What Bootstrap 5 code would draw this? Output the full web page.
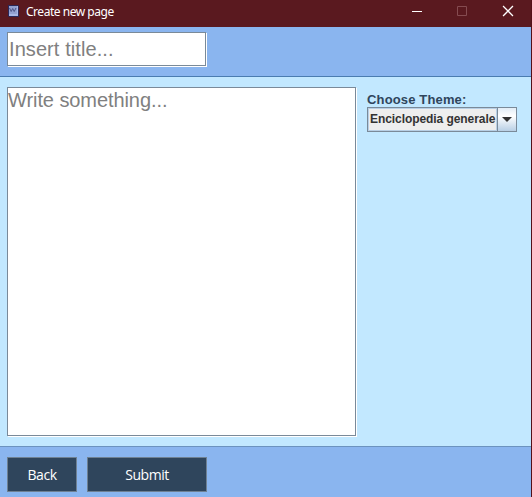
<!DOCTYPE html>
<html lang="en">
<head>
<meta charset="utf-8">
<title>Create new page</title>
<link href="https://cdn.jsdelivr.net/npm/bootstrap@5.3.0/dist/css/bootstrap.min.css" rel="stylesheet">
<style>
body{background:#c2e8ff;font-family:"Liberation Sans",Arial,sans-serif}
.window{width:532px;height:497px;border-right:1px solid #541018;overflow:hidden}
.titlebar{height:27px;background:#5a191f;color:#fff;font:12px/24px "Noto Sans","Open Sans",sans-serif;padding-left:8px}
.app-icon{width:11px;height:12px;margin-top:5px}
.caption-text{margin-left:7px;letter-spacing:-.47px;flex:1}
.window-ctl{width:46px;height:24px}
.topbar{height:50px;background:#8ab5ef;border-bottom:1px solid #4a7cb0;padding:5px 7px}
.bottombar{height:51px;background:#8ab5ef;border-top:1px solid #6c93bf;padding:10px 7px;gap:10px}
.content{height:369px;padding:10px 7px;gap:10px}
.field{border:1px solid #7a8a99;border-radius:0;background:#fff;box-shadow:1px 1px 0 #fff;padding:0 1px;font-size:20px;line-height:24px;color:#808080;resize:none;outline:0;display:block;overflow:hidden}
.field::placeholder{color:#808080;opacity:1}
.title-input{width:199px;height:34px;letter-spacing:.08px}
.body-input{width:349px;height:349px;margin-right:1px;padding:0;letter-spacing:-.08px}
.theme-label{font-size:13px;font-weight:700;line-height:15px;letter-spacing:.15px;color:#2f455c;padding-top:5px;height:20px;white-space:nowrap}
.combo{width:150px;height:25px;border:1px solid #7a8a99;background:#eee}
.combo-value{width:129px;border:1px solid #b8cfe5;color:#333;font-size:12px;font-weight:700;line-height:21px;letter-spacing:-.07px;padding-left:1px;white-space:nowrap}
.combo-arrow{width:19px;border-left:1px solid #7a8a99;background:linear-gradient(#e2edf7,#fff 35%,#b8cfe5);padding:0}
.action{height:35px;border:1px solid #6f8193;border-radius:0;background:#2f455c;color:#fff;font:14px/34px "Open Sans","Noto Sans",sans-serif;padding:0;letter-spacing:-.45px}
.action:hover{background:#2f455c;color:#fff}
.back{width:70px}.submit{width:120px}
</style>
<script src="https://cdn.jsdelivr.net/npm/bootstrap@5.3.0/dist/js/bootstrap.bundle.min.js"></script>
</head>
<body>
<main class="window d-flex flex-column">
  <header class="titlebar d-flex align-items-start flex-shrink-0">
    <svg class="app-icon" viewBox="0 0 11 12"><path d="M0 0H10L11 1V12H1L0 11Z" fill="#2a2859"/><path d="M1 1H9V9H1Z" fill="#93a0d0"/><path d="M1 9H10V11H1ZM9 1H10V10H9Z" fill="#a9b7e5"/><path d="M1.5 3L3.2 6.5L4.7 3.5L6.2 6.5L8 3" fill="none" stroke="#4c5387"/></svg>
    <span class="caption-text">Create new page</span>
    <svg class="window-ctl" viewBox="0 0 46 24"><path d="M19 11.5H29" stroke="#fff"/></svg>
    <svg class="window-ctl" viewBox="0 0 46 24"><path d="M18.5 6.5H27.5V15.5H18.5Z" fill="none" stroke="#854b50"/></svg>
    <svg class="window-ctl" viewBox="0 0 46 24"><path d="M18.5 6.5L27.5 15.5M27.5 6.5L18.5 15.5" stroke="#fff" stroke-width="1.3" stroke-linecap="square"/></svg>
  </header>
  <section class="topbar flex-shrink-0"><input class="field title-input" placeholder="Insert title..." aria-label="Title"></section>
  <section class="content d-flex flex-shrink-0">
    <textarea class="field body-input flex-shrink-0" placeholder="Write something..." aria-label="Page text"></textarea>
    <div>
      <div class="theme-label">Choose Theme:</div>
      <div class="combo d-flex"><span class="combo-value">Enciclopedia generale</span><button class="combo-arrow border-end-0 border-top-0 border-bottom-0 d-flex align-items-center justify-content-center" aria-label="Open themes"><svg class="flex-shrink-0" width="10" height="5" viewBox="0 0 10 5"><path d="M0 0H10L5 5Z" fill="#333"/></svg></button></div>
    </div>
  </section>
  <footer class="bottombar d-flex flex-shrink-0"><button class="btn action back">Back</button><button class="btn action submit">Submit</button></footer>
</main>
</body>
</html>
